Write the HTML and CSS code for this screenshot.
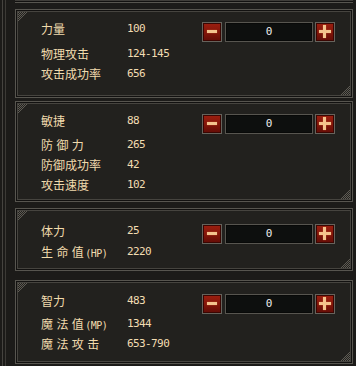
FILE: index.html
```html
<!DOCTYPE html>
<html>
<head>
<meta charset="utf-8">
<link rel="stylesheet" href="styles.css">
</head>
<body>
<div class="frame">
  <div class="frame-inner">
    <div class="prev-edge"></div>

    <section class="panel p1">
      <svg class="orn tl" width="10" height="10" viewBox="0 0 10 10"><path d="M0 0h1v1H0zM2 0h1v1H2zM4 0h1v1H4zM6 0h1v1H6zM8 0h1v1H8zM1 1h1v1H1zM3 1h1v1H3zM5 1h1v1H5zM0 2h1v1H0zM2 2h1v1H2zM4 2h1v1H4zM1 3h1v1H1zM3 3h1v1H3zM0 4h1v1H0zM2 4h1v1H2zM1 5h1v1H1zM0 6h1v1H0zM0 8h1v1H0zM7 1h1v1H7zM6 2h1v1H6zM5 3h1v1H5zM4 4h1v1H4zM3 5h1v1H3zM2 6h1v1H2zM1 7h1v1H1z"/></svg>
      <svg class="orn br" width="10" height="10" viewBox="0 0 10 10"><path d="M0 0h1v1H0zM2 0h1v1H2zM4 0h1v1H4zM6 0h1v1H6zM8 0h1v1H8zM1 1h1v1H1zM3 1h1v1H3zM5 1h1v1H5zM0 2h1v1H0zM2 2h1v1H2zM4 2h1v1H4zM1 3h1v1H1zM3 3h1v1H3zM0 4h1v1H0zM2 4h1v1H2zM1 5h1v1H1zM0 6h1v1H0zM0 8h1v1H0zM7 1h1v1H7zM6 2h1v1H6zM5 3h1v1H5zM4 4h1v1H4zM3 5h1v1H3zM2 6h1v1H2zM1 7h1v1H1z"/></svg>
      <div class="row first">
        <span class="label">力量</span><span class="value">100</span>
        <div class="ctrl"><button class="btn minus"></button><div class="box">0</div><button class="btn plus"></button></div>
      </div>
      <div class="row"><span class="label">物理攻击</span><span class="value">124-145</span></div>
      <div class="row"><span class="label">攻击成功率</span><span class="value">656</span></div>
    </section>

    <section class="panel p2">
      <svg class="orn tl" width="10" height="10" viewBox="0 0 10 10"><path d="M0 0h1v1H0zM2 0h1v1H2zM4 0h1v1H4zM6 0h1v1H6zM8 0h1v1H8zM1 1h1v1H1zM3 1h1v1H3zM5 1h1v1H5zM0 2h1v1H0zM2 2h1v1H2zM4 2h1v1H4zM1 3h1v1H1zM3 3h1v1H3zM0 4h1v1H0zM2 4h1v1H2zM1 5h1v1H1zM0 6h1v1H0zM0 8h1v1H0zM7 1h1v1H7zM6 2h1v1H6zM5 3h1v1H5zM4 4h1v1H4zM3 5h1v1H3zM2 6h1v1H2zM1 7h1v1H1z"/></svg>
      <svg class="orn br" width="10" height="10" viewBox="0 0 10 10"><path d="M0 0h1v1H0zM2 0h1v1H2zM4 0h1v1H4zM6 0h1v1H6zM8 0h1v1H8zM1 1h1v1H1zM3 1h1v1H3zM5 1h1v1H5zM0 2h1v1H0zM2 2h1v1H2zM4 2h1v1H4zM1 3h1v1H1zM3 3h1v1H3zM0 4h1v1H0zM2 4h1v1H2zM1 5h1v1H1zM0 6h1v1H0zM0 8h1v1H0zM7 1h1v1H7zM6 2h1v1H6zM5 3h1v1H5zM4 4h1v1H4zM3 5h1v1H3zM2 6h1v1H2zM1 7h1v1H1z"/></svg>
      <div class="row first">
        <span class="label">敏捷</span><span class="value">88</span>
        <div class="ctrl"><button class="btn minus"></button><div class="box">0</div><button class="btn plus"></button></div>
      </div>
      <div class="row"><span class="label wide">防御力</span><span class="value">265</span></div>
      <div class="row"><span class="label">防御成功率</span><span class="value">42</span></div>
      <div class="row"><span class="label">攻击速度</span><span class="value">102</span></div>
    </section>

    <section class="panel p3">
      <svg class="orn tl" width="10" height="10" viewBox="0 0 10 10"><path d="M0 0h1v1H0zM2 0h1v1H2zM4 0h1v1H4zM6 0h1v1H6zM8 0h1v1H8zM1 1h1v1H1zM3 1h1v1H3zM5 1h1v1H5zM0 2h1v1H0zM2 2h1v1H2zM4 2h1v1H4zM1 3h1v1H1zM3 3h1v1H3zM0 4h1v1H0zM2 4h1v1H2zM1 5h1v1H1zM0 6h1v1H0zM0 8h1v1H0zM7 1h1v1H7zM6 2h1v1H6zM5 3h1v1H5zM4 4h1v1H4zM3 5h1v1H3zM2 6h1v1H2zM1 7h1v1H1z"/></svg>
      <svg class="orn br" width="10" height="10" viewBox="0 0 10 10"><path d="M0 0h1v1H0zM2 0h1v1H2zM4 0h1v1H4zM6 0h1v1H6zM8 0h1v1H8zM1 1h1v1H1zM3 1h1v1H3zM5 1h1v1H5zM0 2h1v1H0zM2 2h1v1H2zM4 2h1v1H4zM1 3h1v1H1zM3 3h1v1H3zM0 4h1v1H0zM2 4h1v1H2zM1 5h1v1H1zM0 6h1v1H0zM0 8h1v1H0zM7 1h1v1H7zM6 2h1v1H6zM5 3h1v1H5zM4 4h1v1H4zM3 5h1v1H3zM2 6h1v1H2zM1 7h1v1H1z"/></svg>
      <div class="row first">
        <span class="label">体力</span><span class="value">25</span>
        <div class="ctrl"><button class="btn minus"></button><div class="box">0</div><button class="btn plus"></button></div>
      </div>
      <div class="row"><span class="label"><span class="wide">生命值</span><span class="abbr">(HP)</span></span><span class="value">2220</span></div>
    </section>

    <section class="panel p4">
      <svg class="orn tl" width="10" height="10" viewBox="0 0 10 10"><path d="M0 0h1v1H0zM2 0h1v1H2zM4 0h1v1H4zM6 0h1v1H6zM8 0h1v1H8zM1 1h1v1H1zM3 1h1v1H3zM5 1h1v1H5zM0 2h1v1H0zM2 2h1v1H2zM4 2h1v1H4zM1 3h1v1H1zM3 3h1v1H3zM0 4h1v1H0zM2 4h1v1H2zM1 5h1v1H1zM0 6h1v1H0zM0 8h1v1H0zM7 1h1v1H7zM6 2h1v1H6zM5 3h1v1H5zM4 4h1v1H4zM3 5h1v1H3zM2 6h1v1H2zM1 7h1v1H1z"/></svg>
      <svg class="orn br" width="10" height="10" viewBox="0 0 10 10"><path d="M0 0h1v1H0zM2 0h1v1H2zM4 0h1v1H4zM6 0h1v1H6zM8 0h1v1H8zM1 1h1v1H1zM3 1h1v1H3zM5 1h1v1H5zM0 2h1v1H0zM2 2h1v1H2zM4 2h1v1H4zM1 3h1v1H1zM3 3h1v1H3zM0 4h1v1H0zM2 4h1v1H2zM1 5h1v1H1zM0 6h1v1H0zM0 8h1v1H0zM7 1h1v1H7zM6 2h1v1H6zM5 3h1v1H5zM4 4h1v1H4zM3 5h1v1H3zM2 6h1v1H2zM1 7h1v1H1z"/></svg>
      <div class="row first">
        <span class="label">智力</span><span class="value">483</span>
        <div class="ctrl"><button class="btn minus"></button><div class="box">0</div><button class="btn plus"></button></div>
      </div>
      <div class="row"><span class="label"><span class="wide">魔法值</span><span class="abbr">(MP)</span></span><span class="value">1344</span></div>
      <div class="row"><span class="label wide">魔法攻击</span><span class="value">653-790</span></div>
    </section>
  </div>
</div>
</body>
</html>
```

FILE: styles.css
```css
html, body {
  margin: 0;
  padding: 0;
  background: #1c1b19;
  width: 356px;
  height: 366px;
  overflow: hidden;
}

.frame {
  margin-left: 2px;
  border-left: 1px solid #45433f;
  padding-left: 2px;
  height: 366px;
}

.frame-inner {
  border-left: 1px solid #3c3a36;
  padding-left: 9px;
  height: 366px;
  display: flex;
  flex-direction: column;
}

.prev-edge {
  width: 338px;
  height: 3px;
  background: linear-gradient(to bottom, #3f3d39 0 1px, #121110 1px 2px, #57554f 2px 3px);
}

.panel {
  position: relative;
  box-sizing: border-box;
  width: 338px;
  background: #22211e;
  border: 1px solid #57554f;
  box-shadow: inset 0 0 0 1px #121110, inset 0 0 0 2px #46443f;
  padding: 0 0 0 25px;
  display: flex;
  flex-direction: column;
  font-family: "Noto Sans CJK SC", sans-serif;
  font-size: 12px;
  color: #f1dbad;
}

.p1 { margin-top: 6px; height: 89px; padding-top: 9px; }
.p1 .row.first { margin-bottom: 5px; }

.p2 { margin-top: 3px; height: 101px; padding-top: 9px; }
.p2 .row.first { margin-bottom: 4px; }

.p3 { margin-top: 6px; height: 63px; padding-top: 12px; }
.p3 .row.first { margin-bottom: 1px; }

.p4 { margin-top: 9px; height: 84px; padding-top: 10px; }
.p4 .row.first { margin-bottom: 3px; }

.row {
  display: flex;
  align-items: flex-start;
  height: 20px;
  line-height: 20px;
}

.label {
  width: 86px;
  white-space: nowrap;
}

.wide { letter-spacing: 3.4px; }

.abbr {
  font-family: "DejaVu Sans Mono", monospace;
  font-size: 10px;
  letter-spacing: -0.5px;
  margin-left: -2px;
}

.value {
  font-family: "DejaVu Sans Mono", monospace;
  font-size: 11px;
  letter-spacing: -0.6px;
  color: #f2dcb2;
  width: 75px;
}

.ctrl {
  display: flex;
  align-items: center;
  margin-top: 3px;
}

.btn {
  box-sizing: border-box;
  width: 20px;
  height: 20px;
  padding: 0;
  border: 1px solid #66635c;
  background: linear-gradient(to bottom, #9c1f10 0%, #84160a 50%, #620c06 100%);
  box-shadow: inset 0 0 0 1px #3a0602;
  position: relative;
}

.btn::before, .btn::after {
  content: "";
  position: absolute;
  background: #f4c48e;
  box-shadow: 0 0 1px #ff9a50;
}

.minus::before {
  left: 4px; top: 7px; width: 10px; height: 3px;
}
.minus::after { display: none; }

.plus::before {
  left: 3px; top: 7px; width: 12px; height: 3px;
}
.plus::after {
  left: 7px; top: 2px; width: 3px; height: 13px;
}

.box {
  box-sizing: border-box;
  width: 88px;
  height: 20px;
  margin: 0 2px 0 3px;
  border: 1px solid #57554f;
  box-shadow: inset 0 0 0 1px #080908;
  background: #0d0f0e;
  color: #ececec;
  font-family: "DejaVu Sans Mono", monospace;
  font-size: 11px;
  line-height: 18px;
  text-align: center;
}

.orn {
  position: absolute;
  fill: #5e5b54;
}
.orn.tl { left: 2px; top: 2px; }
.orn.br { right: 2px; bottom: 2px; transform: rotate(180deg); }
```
